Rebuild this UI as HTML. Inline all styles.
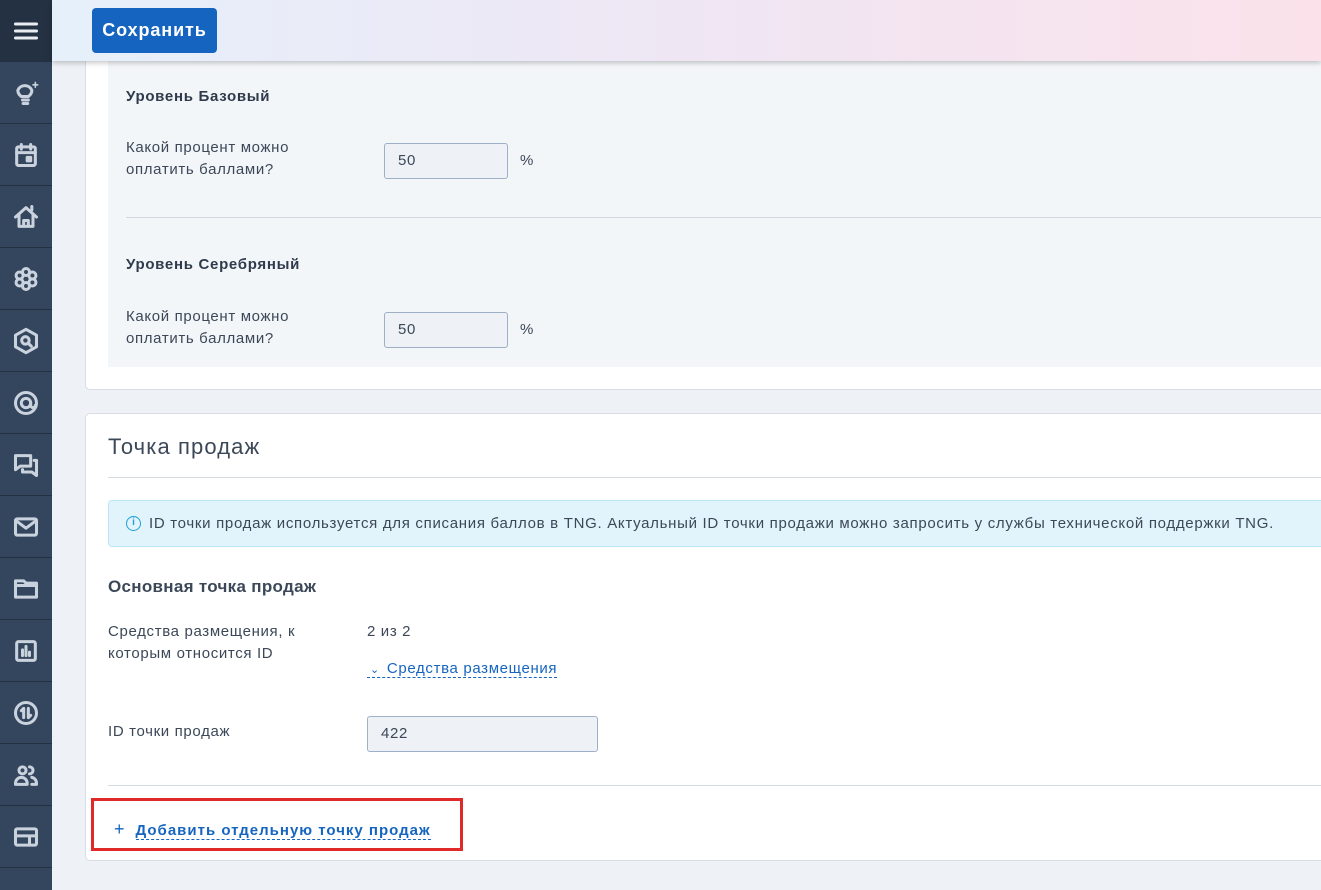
<!DOCTYPE html>
<html><head><meta charset="utf-8"><style>
*{box-sizing:border-box;margin:0;padding:0}
body{width:1321px;height:890px;overflow:hidden;background:#eef1f5;font-family:"Liberation Sans","DejaVu Sans",sans-serif;color:#2f3b4c;position:relative;letter-spacing:.65px}
.side{position:absolute;left:0;top:0;width:52px;height:890px;background:#34465e}
.side .top{height:62px;background:#243142;display:flex;align-items:center;justify-content:center}
.side .it{height:62px;border-bottom:1px solid #243142;display:flex;align-items:center;justify-content:center}
.side svg{width:28px;height:28px;fill:none;stroke:#c9d2dd;stroke-width:2.6;stroke-linecap:round;stroke-linejoin:round}
.hdr{position:absolute;left:52px;top:0;right:0;height:61px;background:linear-gradient(90deg,#e6f0fb 0%,#efe6f4 50%,#fbe2ea 100%);box-shadow:0 2px 5px rgba(0,0,0,.22);z-index:2}
.btn{position:absolute;left:40px;top:8px;width:125px;height:45px;background:#1565c0;border-radius:4px;color:#fff;font-weight:bold;font-size:18px;line-height:45px;text-align:center;letter-spacing:.9px}
.card{position:absolute;left:85px;right:-5px;background:#fff;border:1px solid #d8dde5;border-radius:5px}
.c1{top:40px;height:350px}
.inner{position:absolute;left:22px;right:0;top:0;bottom:22px;background:#f3f6f9}
.lvl{position:absolute;left:18px;font-weight:bold;font-size:15px;color:#2f3b4c;letter-spacing:.7px}
.lbl{position:absolute;left:18px;font-size:15px;line-height:22px;color:#3c4858}
.inp{position:absolute;width:124px;height:36px;border:1px solid #9fb0c6;border-radius:3px;background:#eef1f5;font-size:15px;line-height:34px;padding-left:13px;color:#3c4858}
.pct{position:absolute;font-size:15px;color:#3c4858}
.c2{top:413px;height:448px}
.title{position:absolute;left:22px;top:20px;font-size:22px;color:#3c4858;letter-spacing:1.1px}
.hr{position:absolute;left:22px;right:0;height:1px;background:#d6dbe2}
.info{position:absolute;left:22px;right:0;top:86px;height:47px;background:#e2f4fb;border:1px solid #bde5f5;border-radius:4px;font-size:15px;line-height:45px;padding-left:40px;color:#3c4858;letter-spacing:.7px}
.info .ic{position:absolute;left:17px;top:15px;width:15px;height:15px;border:1.7px solid #1ea0d8;border-radius:50%;color:#1ea0d8;font-size:10px;line-height:12px;text-align:center;font-weight:bold;letter-spacing:0}
.link{color:#1565c0;border-bottom:1px dashed #1565c0}
</style></head><body>
<div class="side">
<div class="top"><svg viewBox="0 0 24 24" style="stroke:#e8edf2;stroke-width:2.6"><path d="M3 6h18M3 12h18M3 18h18"/></svg></div>
<div class="it"><svg viewBox="0 0 24 24"><path d="M9 18h5M9.5 21h4M8 15c-2-1.5-3-3.3-3-5.3A6.5 6.5 0 0 1 17 9.7c0 2-1 3.8-3 5.3z"/><path d="M20 3v4M18 5h4" stroke-width="1.4"/></svg></div>
<div class="it"><svg viewBox="0 0 24 24"><rect x="4" y="5" width="16" height="16" rx="1.5"/><path d="M8 3v4M16 3v4M4 10h16"/><rect x="13" y="14" width="3" height="3" fill="#c9d2dd"/></svg></div>
<div class="it"><svg viewBox="0 0 24 24"><path d="M3 12l9-8 9 8M6 10v10h12V10M10 20v-5h4v5M17 6V3"/></svg></div>
<div class="it"><svg viewBox="0 0 24 24"><circle cx="12" cy="6" r="3"/><circle cx="12" cy="18" r="3"/><circle cx="6.5" cy="9" r="3"/><circle cx="17.5" cy="9" r="3"/><circle cx="6.5" cy="15" r="3"/><circle cx="17.5" cy="15" r="3"/></svg></div>
<div class="it"><svg viewBox="0 0 24 24"><path d="M12 2l9 5v10l-9 5-9-5V7z"/><circle cx="11.5" cy="11.5" r="3.2"/><path d="M14 14l2.5 2.5"/></svg></div>
<div class="it"><svg viewBox="0 0 24 24"><circle cx="12" cy="12" r="9"/><circle cx="12" cy="12" r="4"/><path d="M16 12v2a2 2 0 0 0 4 0"/></svg></div>
<div class="it"><svg viewBox="0 0 24 24"><path d="M3 4h13v9H7l-4 3z"/><path d="M19 8h2v13l-4-3H9v-2"/></svg></div>
<div class="it"><svg viewBox="0 0 24 24"><rect x="3" y="5" width="18" height="14" rx="1.5"/><path d="M4 7l8 6 8-6"/></svg></div>
<div class="it"><svg viewBox="0 0 24 24"><path d="M3 5h7l2 2h9v12H3z"/><path d="M3 9h18"/></svg></div>
<div class="it"><svg viewBox="0 0 24 24"><rect x="4" y="4" width="16" height="16" rx="1.5"/><path d="M9 16v-5M12 16V8M15 16v-3"/></svg></div>
<div class="it"><svg viewBox="0 0 24 24"><circle cx="12" cy="12" r="9"/><path d="M10 16V8L8 10M14 8v8l2-2"/></svg></div>
<div class="it"><svg viewBox="0 0 24 24"><circle cx="9" cy="8" r="3"/><path d="M3 20v-1a5 5 0 0 1 10 0v1zM15 5a3 3 0 0 1 0 6M17 14a5 5 0 0 1 4 5v1h-4"/></svg></div>
<div class="it"><svg viewBox="0 0 24 24"><rect x="3" y="5" width="18" height="14" rx="1.5"/><path d="M3 11h18M15 11v8"/></svg></div>
</div>
<div class="hdr"><div class="btn">Сохранить</div></div>

<div class="card c1">
 <div class="inner">
  <div class="lvl" style="top:47px">Уровень Базовый</div>
  <div class="lbl" style="top:96px">Какой процент можно<br>оплатить баллами?</div>
  <div class="inp" style="left:276px;top:102px">50</div>
  <div class="pct" style="left:412px;top:111px">%</div>
  <div class="hr" style="left:18px;top:176px;background:#d3d8e0"></div>
  <div class="lvl" style="top:215px">Уровень Серебряный</div>
  <div class="lbl" style="top:265px">Какой процент можно<br>оплатить баллами?</div>
  <div class="inp" style="left:276px;top:271px">50</div>
  <div class="pct" style="left:412px;top:280px">%</div>
 </div>
</div>

<div class="card c2">
 <div class="title">Точка продаж</div>
 <div class="hr" style="top:63px"></div>
 <div class="info"><span class="ic">i</span>ID точки продаж используется для списания баллов в TNG. Актуальный ID точки продажи можно запросить у службы технической поддержки TNG.</div>
 <div style="position:absolute;left:22px;top:163px;font-size:17px;font-weight:bold;color:#3c4858;letter-spacing:.3px">Основная точка продаж</div>
 <div class="lbl" style="left:22px;top:207px">Средства размещения, к<br>которым относится ID</div>
 <div style="position:absolute;left:281px;top:209px;font-size:15px;color:#3c4858">2 из 2</div>
 <div style="position:absolute;left:281px;top:244px;font-size:15px;line-height:21px"><span class="link"><span style="font-size:11px;padding:0 7px 0 3px">⌄</span>Средства размещения</span></div>
 <div class="lbl" style="left:22px;top:307px">ID точки продаж</div>
 <div class="inp" style="left:281px;top:302px;width:231px">422</div>
 <div class="hr" style="top:371px"></div>
 <div style="position:absolute;left:28px;top:404px;font-size:15px;font-weight:bold;line-height:22px;color:#1565c0;letter-spacing:1px"><span style="font-weight:normal;font-size:18px;margin-right:10px">+</span><span class="link">Добавить отдельную точку продаж</span></div>
</div>
<div style="position:absolute;left:91px;top:798px;width:372px;height:53px;border:3px solid #e02a2a"></div>
</body></html>
